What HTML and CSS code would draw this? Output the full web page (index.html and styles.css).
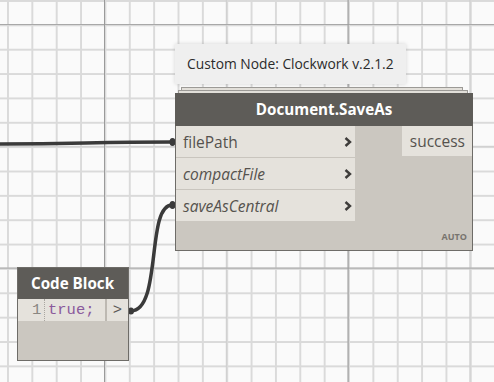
FILE: index.html
```html
<!DOCTYPE html>
<html>
  <head>
    <link rel="stylesheet" href="styles.css">
  </head>
  <body>
    <div class="canvas">
      <svg class="wires" width="494" height="382" viewBox="0 0 494 382">
        <path d="M -10 144 C 80 144, 90 142, 172 142" />
        <path d="M 131 311 C 162 311, 146 205, 172 205" />
        <ellipse cx="172.5" cy="142" rx="3" ry="4" />
        <ellipse cx="172.5" cy="205" rx="3" ry="4" />
        <ellipse cx="131" cy="311" rx="3" ry="3.5" />
      </svg>

      <div class="tooltip">Custom Node: Clockwork v.2.1.2</div>

      <div class="node saveas">
        <div class="stack stack-back"></div>
        <div class="stack stack-front"></div>
        <div class="node-head">Document.SaveAs</div>
        <div class="node-body">
          <div class="inputs">
            <div class="port">
              <span>filePath</span>
              <svg class="chev" width="8" height="10" viewBox="0 0 8 10"><path d="M1.5 1 L6 5 L1.5 9" /></svg>
            </div>
            <div class="port">
              <span class="opt">compactFile</span>
              <svg class="chev" width="8" height="10" viewBox="0 0 8 10"><path d="M1.5 1 L6 5 L1.5 9" /></svg>
            </div>
            <div class="port">
              <span class="opt">saveAsCentral</span>
              <svg class="chev" width="8" height="10" viewBox="0 0 8 10"><path d="M1.5 1 L6 5 L1.5 9" /></svg>
            </div>
          </div>
          <div class="outputs">
            <div class="out">success</div>
          </div>
        </div>
        <div class="lacing">AUTO</div>
      </div>

      <div class="node codeblock">
        <div class="node-head">Code Block</div>
        <div class="code-row">
          <span class="lineno">1</span>
          <span class="code">true;</span>
          <span class="code-out">&gt;</span>
        </div>
        <div class="code-rest"></div>
      </div>
    </div>
  </body>
</html>
```

FILE: styles.css
```css
body {
  margin: 0;
  padding: 0;
  overflow: hidden;
  font-family: "Open Sans", "Liberation Sans", sans-serif;
}

.canvas {
  position: relative;
  width: 494px;
  height: 382px;
  background-color: #fafafa;
  background-image:
    linear-gradient(to right, #9a9a9a 1px, transparent 1px),
    linear-gradient(to bottom, #a8a8a8 1px, transparent 1px),
    linear-gradient(to right, #cdcdcd 1px, transparent 1px),
    linear-gradient(to bottom, #cdcdcd 1px, transparent 1px),
    linear-gradient(to right, #dadada 1.5px, transparent 1.5px),
    linear-gradient(to bottom, #dadada 1.5px, transparent 1.5px);
  background-size:
    243.6px 100%,
    100% 243.6px,
    121.8px 100%,
    100% 121.8px,
    24.36px 100%,
    100% 24.36px;
  background-position:
    104px 0,
    0 24px,
    104px 0,
    0 24px,
    7px 0,
    0 0;
}

.wires {
  position: absolute;
  left: 0;
  top: 0;
}

.wires path {
  fill: none;
  stroke: #3a3a3a;
  stroke-width: 3.5;
}

.wires ellipse {
  fill: #3a3a3a;
}

.tooltip {
  position: absolute;
  left: 175px;
  top: 44px;
  width: 231px;
  height: 40px;
  box-sizing: border-box;
  padding-left: 12px;
  line-height: 40px;
  font-size: 13.8px;
  color: #2b2b2b;
  background: #efefef;
  box-shadow: 0 0 4px rgba(0, 0, 0, 0.15);
}

.node {
  position: absolute;
  box-sizing: border-box;
  background: #cbc7c0;
  border: 1px solid #6e6c68;
}

.node-head {
  background: #5e5c58;
  color: #fff;
  font-weight: bold;
  font-size: 15.2px;
}

.saveas {
  left: 175px;
  top: 93px;
  width: 298px;
  height: 158px;
}

.saveas .node-head {
  height: 33px;
  line-height: 32px;
  text-align: center;
  margin: -1px -1px 0 -1px;
  position: relative;
}

.stack {
  position: absolute;
  background: #e2dfd9;
  border: 1px solid #9c9a96;
  height: 6px;
}

.stack-back {
  left: 5px;
  right: 9px;
  top: -7px;
}

.stack-front {
  left: 2px;
  right: 4px;
  top: -4px;
}

.node-body {
  display: flex;
  justify-content: space-between;
}

.inputs {
  width: 179px;
}

.port {
  display: flex;
  align-items: center;
  justify-content: space-between;
  height: 31px;
  padding: 0 3px 0 7px;
  background: #e5e2dc;
  border-bottom: 1px solid #c9c5be;
  font-size: 15.5px;
  color: #55524e;
}

.port:last-child {
  border-bottom: none;
}

.opt {
  font-style: italic;
}

.chev path {
  fill: none;
  stroke: #3e3c3a;
  stroke-width: 2.4;
}

.out {
  width: 70px;
  height: 30px;
  box-sizing: border-box;
  padding-right: 7px;
  line-height: 30px;
  text-align: right;
  background: #e5e2dc;
  font-size: 15.5px;
  color: #55524e;
}

.lacing {
  position: absolute;
  right: 5px;
  bottom: 7px;
  font-size: 9px;
  font-weight: bold;
  color: #78746e;
}

.codeblock {
  left: 17px;
  top: 267px;
  width: 112px;
  height: 94px;
}

.codeblock .node-head {
  height: 31px;
  line-height: 31px;
  padding-left: 13px;
}

.code-row {
  display: flex;
  height: 22px;
  line-height: 22px;
  background: #e5e2dc;
  font-family: "Liberation Mono", "DejaVu Sans Mono", monospace;
  font-size: 15.5px;
}

.lineno {
  width: 27px;
  box-sizing: border-box;
  padding-left: 14px;
  color: #8a8782;
  border-right: 1px dotted #a9a6a0;
}

.code {
  flex: 1;
  padding-left: 3px;
  color: #8b5a9c;
}

.code-out {
  width: 23px;
  box-sizing: border-box;
  text-align: center;
  color: #5a5855;
  border-left: 2px solid #bdb9b2;
}
```
